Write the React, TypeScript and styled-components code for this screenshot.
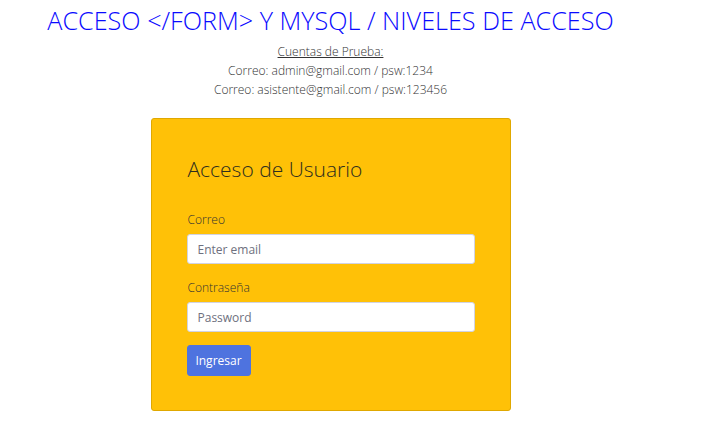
import React from "react";
import styled, { createGlobalStyle } from "styled-components";

const Global = createGlobalStyle`
  html, body { margin: 0; padding: 0; background: #fff; }
  body { font-family: "Open Sans", "Noto Sans", sans-serif; }
  * { box-sizing: border-box; }
`;

const Page = styled.div`
  width: 661px;
  display: flex;
  flex-direction: column;
  align-items: center;
  padding-top: 5px;
`;

const Title = styled.h1`
  margin: 0;
  font-family: "Open Sans", sans-serif;
  font-weight: 300;
  font-size: 25.2px;
  line-height: 30px;
  color: #0a0aff;
  white-space: nowrap;
`;

const Info = styled.div`
  margin-top: 7px;
  text-align: center;
  font-family: "Open Sans", sans-serif;
  font-weight: 300;
  font-size: 12px;
  line-height: 19px;
  color: #333;
`;

const Under = styled.div`
  text-decoration: underline;
`;

const Card = styled.form`
  margin-top: 19px;
  width: 360px;
  height: 293px;
  background: #ffc107;
  border: 1px solid #e0a800;
  border-radius: 3px;
  padding: 36px 35px 0 35px;
  display: flex;
  flex-direction: column;
`;

const CardTitle = styled.h2`
  margin: 0;
  font-family: "Open Sans", sans-serif;
  font-weight: 300;
  font-size: 21px;
  line-height: 28px;
  color: #2e2e1e;
  padding-left: 1px;
`;

const Field = styled.div<{ $top: number }>`
  display: flex;
  flex-direction: column;
  margin-top: ${(p) => p.$top}px;
`;

const Label = styled.label`
  font-family: "Open Sans", sans-serif;
  font-weight: 300;
  font-size: 12px;
  line-height: 17px;
  color: #333;
  margin-bottom: 6px;
  padding-left: 1px;
`;

const Input = styled.input`
  width: 288px;
  height: 30px;
  border: 1px solid #d1d3e2;
  border-radius: 3px;
  background: #fff;
  padding: 0 10px;
  font-family: "Open Sans", sans-serif;
  font-size: 12px;
  color: #6e707e;
  outline: none;
  &::placeholder { color: #6e707e; }
`;

const Button = styled.button`
  margin-top: 13px;
  align-self: flex-start;
  width: 64px;
  height: 31px;
  border: 1px solid #4e73df;
  border-radius: 3px;
  background: #4e73df;
  color: #fff;
  font-family: "Open Sans", sans-serif;
  font-size: 12px;
  padding: 0;
  cursor: pointer;
`;

export default function App() {
  return (
    <>
      <Global />
      <Page>
        <Title>ACCESO &lt;/FORM&gt; Y MYSQL / NIVELES DE ACCESO</Title>
        <Info>
          <Under>Cuentas de Prueba:</Under>
          <div>Correo: admin@gmail.com / psw:1234</div>
          <div>Correo: asistente@gmail.com / psw:123456</div>
        </Info>
        <Card onSubmit={(e) => e.preventDefault()}>
          <CardTitle>Acceso de Usuario</CardTitle>
          <Field $top={28}>
            <Label>Correo</Label>
            <Input type="email" placeholder="Enter email" />
          </Field>
          <Field $top={15}>
            <Label>Contraseña</Label>
            <Input type="password" placeholder="Password" />
          </Field>
          <Button type="submit">Ingresar</Button>
        </Card>
      </Page>
    </>
  );
}
